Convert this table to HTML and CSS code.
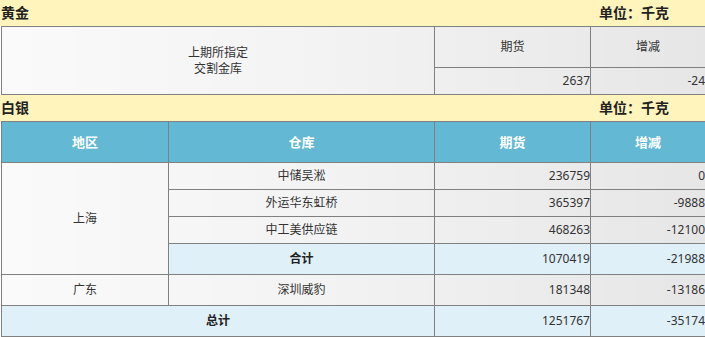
FILE: index.html
```html
<!DOCTYPE html>
<html lang="zh-CN">
<head>
<meta charset="utf-8">
<title>库存</title>
<link rel="stylesheet" href="styles.css">
</head>
<body>
<div class="page">
  <div class="bar bar-first"><span class="bar-title">黄金</span><span class="bar-unit">单位：千克</span></div>
  <table class="grid gold">
    <colgroup><col class="c1"><col class="c2"><col class="c3"><col class="c4"></colgroup>
    <tr class="gold-head">
      <td colspan="2" rowspan="2" class="center">上期所指定<br>交割金库</td>
      <td class="center">期货</td>
      <td class="center">增减</td>
    </tr>
    <tr class="row">
      <td class="num">2637</td>
      <td class="num">-24</td>
    </tr>
  </table>
  <div class="bar"><span class="bar-title">白银</span><span class="bar-unit">单位：千克</span></div>
  <table class="grid silver">
    <colgroup><col class="c1"><col class="c2"><col class="c3"><col class="c4"></colgroup>
    <tr class="head">
      <th>地区</th><th>仓库</th><th>期货</th><th>增减</th>
    </tr>
    <tr class="row">
      <td rowspan="4" class="center region">上海</td>
      <td class="center">中储吴淞</td>
      <td class="num">236759</td>
      <td class="num">0</td>
    </tr>
    <tr class="row">
      <td class="center">外运华东虹桥</td>
      <td class="num">365397</td>
      <td class="num">-9888</td>
    </tr>
    <tr class="row">
      <td class="center">中工美供应链</td>
      <td class="num">468263</td>
      <td class="num">-12100</td>
    </tr>
    <tr class="row tall sum">
      <td class="center bold">合计</td>
      <td class="num">1070419</td>
      <td class="num">-21988</td>
    </tr>
    <tr class="row tall">
      <td class="center">广东</td>
      <td class="center">深圳威豹</td>
      <td class="num">181348</td>
      <td class="num">-13186</td>
    </tr>
    <tr class="row tall sum">
      <td colspan="2" class="center bold">总计</td>
      <td class="num">1251767</td>
      <td class="num">-35174</td>
    </tr>
  </table>
</div>
</body>
</html>
```

FILE: styles.css
```css
html, body {
  margin: 0;
  padding: 0;
  background: #ffffff;
}

body {
  font-family: "Noto Sans", "Noto Sans CJK SC", sans-serif;
  font-size: 12px;
  color: #333333;
}

.page {
  width: 705px;
}

.bar {
  display: flex;
  justify-content: space-between;
  align-items: center;
  height: 26px;
  background: #fff4bb;
  font-weight: bold;
  font-size: 14px;
  color: #222222;
  line-height: 26px;
}

.bar-first {
  height: 26px;
}

.bar-title {
  padding-left: 1px;
}

.bar-unit {
  padding-right: 36px;
}

.grid {
  margin-left: 1px;
  width: 704px;
  border-collapse: collapse;
  table-layout: fixed;
  background: linear-gradient(to right, #fafafa 0%, #f3f3f3 45%, #e6e6e6 100%);
}

.grid td, .grid th {
  border: 1px solid #808080;
  padding: 0;
  line-height: 16px;
}

.c1 { width: 167px; }
.c2 { width: 266px; }
.c3 { width: 156px; }
.c4 { width: 115px; }

.gold-head { height: 41px; }

.row { height: 27px; }
.row.tall { height: 31px; }

.head { height: 41px; }

.head th {
  background: #63b8d4;
  color: #ffffff;
  font-size: 13px;
  font-weight: bold;
  text-align: center;
}

.center { text-align: center; }

.num { text-align: right; }

.bold {
  font-weight: bold;
  color: #222222;
}

.sum td { background: #dff0f8; }

.sum td.region { background: transparent; }
```
